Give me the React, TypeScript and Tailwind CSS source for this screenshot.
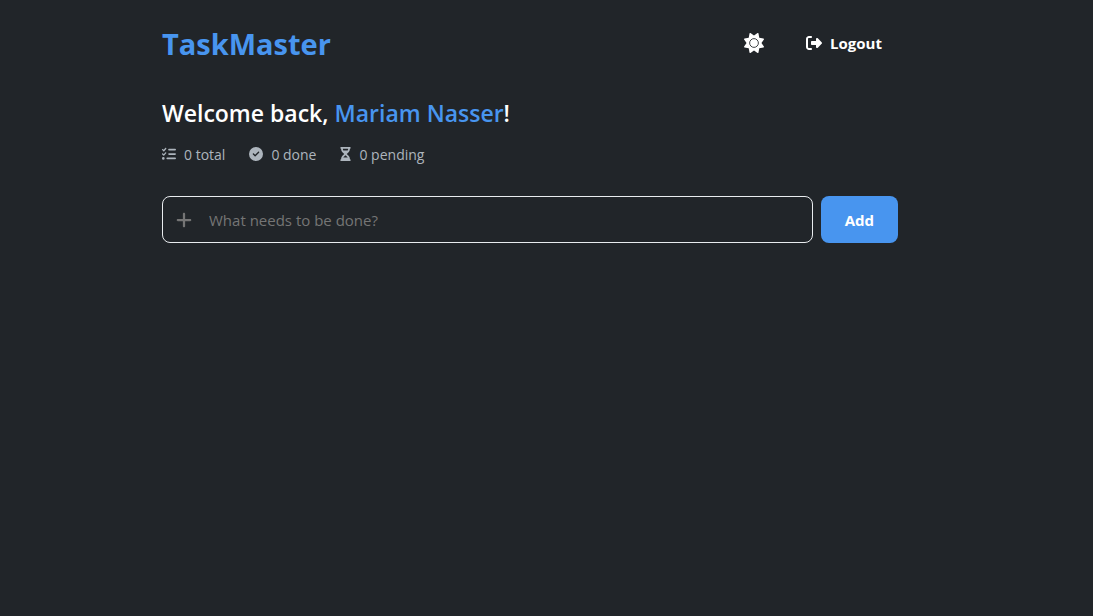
import { useState } from "react";
import type { FormEvent } from "react";
import { FaCircleCheck, FaHourglassHalf, FaListCheck, FaPlus, FaRightFromBracket } from "react-icons/fa6";

type Task = { title: string; done: boolean };

function SunIcon() {
  return (
    <svg viewBox="0 0 512 512" className="size-5" aria-hidden="true">
      <path
        fill="currentColor"
        d="M361.5 1.2c5 2.1 8.6 6.6 9.6 11.9L391 121l107.9 19.8c5.3 1 9.8 4.6 11.9 9.6s1.5 10.7-1.6 15.2L446.9 256l62.3 90.3c3.1 4.5 3.7 10.2 1.6 15.2s-6.6 8.6-11.9 9.6L391 391 371.1 498.9c-1 5.3-4.6 9.8-9.6 11.9s-10.7 1.5-15.2-1.6L256 446.9l-90.3 62.3c-4.5 3.1-10.2 3.7-15.2 1.6s-8.6-6.6-9.6-11.9L121 391 13.1 371.1c-5.3-1-9.8-4.6-11.9-9.6s-1.5-10.7 1.6-15.2L65.1 256 2.8 165.7c-3.1-4.5-3.7-10.2-1.6-15.2s6.6-8.6 11.9-9.6L121 121 140.9 13.1c1-5.3 4.6-9.8 9.6-11.9s10.7-1.5 15.2 1.6L256 65.1 346.3 2.8c4.5-3.1 10.2-3.7 15.2-1.6z"
      />
      <circle cx="256" cy="256" r="112" fill="none" stroke="#212529" strokeWidth="22" />
    </svg>
  );
}

export default function App() {
  const [tasks, setTasks] = useState<Task[]>([]);
  const [title, setTitle] = useState("");
  const done = tasks.filter((task) => task.done).length;

  const addTask = (event: FormEvent) => {
    event.preventDefault();
    if (!title.trim()) return;
    setTasks([...tasks, { title: title.trim(), done: false }]);
    setTitle("");
  };

  return (
    <div className="min-h-screen bg-[#212529] font-['Open_Sans','Noto_Sans',sans-serif] text-white">
      <div className="mx-auto max-w-[801px] pt-5 pr-[49px] pl-4">
        <header className="flex items-center justify-between">
          <h1 className="text-[29px] leading-12 font-bold text-[#4895ef]">TaskMaster</h1>
          <div className="flex items-center gap-4 pb-0.5">
            <button type="button" aria-label="Toggle theme" className="flex size-10 items-center justify-center rounded-full">
              <SunIcon />
            </button>
            <button type="button" className="flex h-10 items-center gap-2 rounded-lg px-4 text-[15px] font-bold">
              <FaRightFromBracket className="size-4" />
              Logout
            </button>
          </div>
        </header>

        <main>
          <h2 className="mt-[27px] text-[23px] leading-9 font-semibold">
            Welcome back, <span className="text-[#4895ef]">Mariam Nasser</span>!
          </h2>
          <ul className="mt-3 flex gap-6 text-sm leading-5 text-[#adb5bd]">
            <li className="flex items-center gap-2">
              <FaListCheck />
              <span className="pt-0.5">{tasks.length} total</span>
            </li>
            <li className="flex items-center gap-2">
              <FaCircleCheck />
              <span className="pt-0.5">{done} done</span>
            </li>
            <li className="flex items-center gap-2">
              <FaHourglassHalf className="w-[11px]" />
              <span className="pt-0.5">{tasks.length - done} pending</span>
            </li>
          </ul>

          <form onSubmit={addTask} className="mt-[31px] flex h-[47px] gap-2">
            <label className="flex flex-1 items-center gap-4 rounded-lg border border-[#e9ecef] px-3 text-[#757575]">
              <FaPlus className="size-[18px]" />
              <input
                aria-label="New task"
                value={title}
                onChange={(event) => setTitle(event.target.value)}
                placeholder="What needs to be done?"
                className="min-w-0 flex-1 bg-transparent pt-0.5 text-[15px] text-white outline-none placeholder:text-[#757575]"
              />
            </label>
            <button type="submit" className="rounded-lg bg-[#4895ef] px-6 pt-0.5 text-[15px] font-bold">Add</button>
          </form>

          <ul className="mt-6 flex flex-col gap-2">
            {tasks.map((task, index) => (
              <li key={index}>
                <label className="flex items-center gap-3 rounded-lg border border-[#495057] p-3 text-[15px]">
                  <input
                    type="checkbox"
                    checked={task.done}
                    onChange={() => setTasks(tasks.map((item, i) => (i === index ? { ...item, done: !item.done } : item)))}
                  />
                  {task.title}
                </label>
              </li>
            ))}
          </ul>
        </main>
      </div>
    </div>
  );
}
